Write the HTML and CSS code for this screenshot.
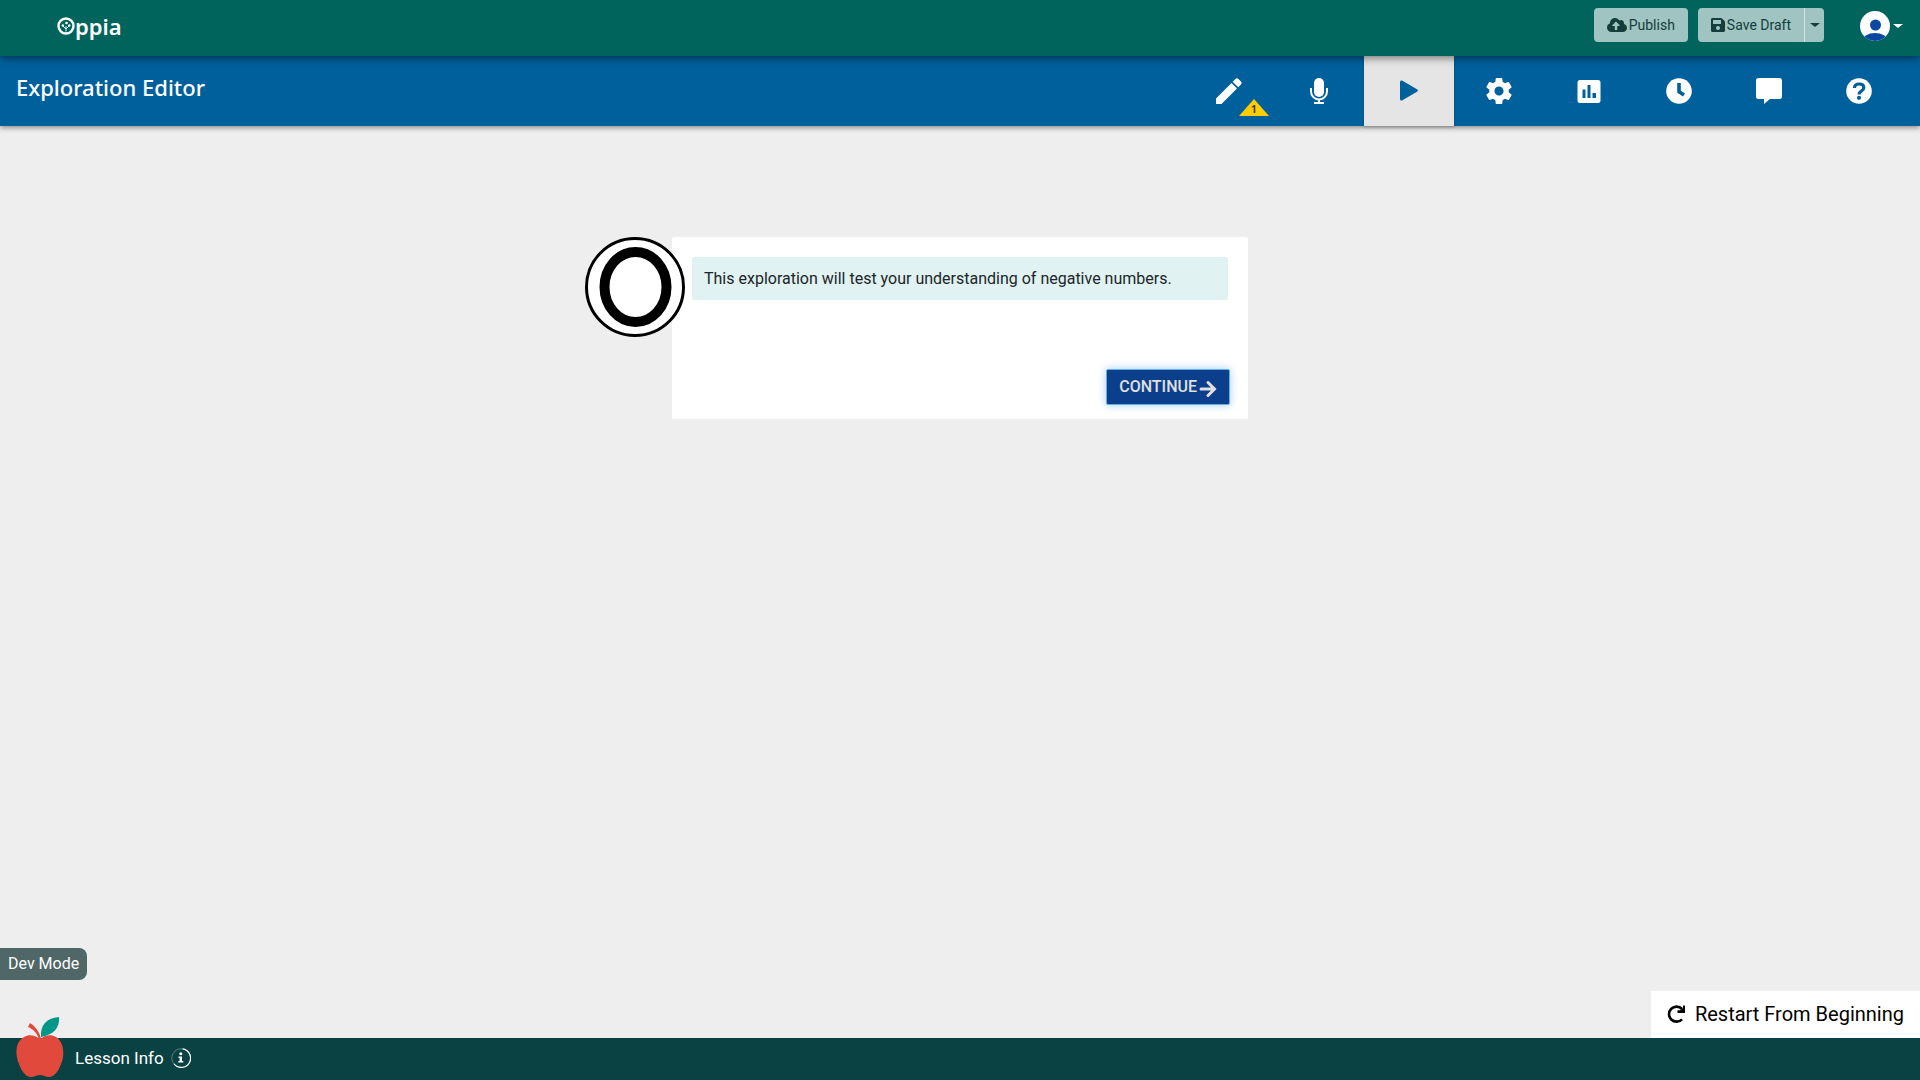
FILE: index.html
```html
<!DOCTYPE html>
<html lang="en">
<head>
<meta charset="utf-8">
<meta name="viewport" content="width=device-width, initial-scale=1">
<title>Exploration Editor - Oppia</title>
<link rel="stylesheet" href="styles.css">
</head>
<body>
<header class="topbar">
  <a class="brand" href="#" aria-label="Oppia">
    <svg class="brand-mark" viewBox="0 0 18 18" aria-hidden="true">
      <circle cx="9" cy="9" r="7.500" fill="none" stroke="#fff" stroke-width="2.400"/>
      <path d="M9 14.500V9M9 12L6 9M9 12l3-3" fill="none" stroke="#fff" stroke-width=".9"/>
      <circle cx="9.500" cy="6" r="1.300" fill="#fff"/><circle cx="5.800" cy="8.500" r="1.200" fill="#fff"/><circle cx="12.300" cy="8.500" r="1.200" fill="#fff"/>
    </svg><span class="brand-name">ppia</span>
  </a>
  <div class="actions">
    <button class="action" type="button">
      <svg class="cloud" viewBox="0 0 640 512" fill="currentColor" aria-hidden="true"><path d="M537.600 226.600c4.100-10.700 6.400-22.400 6.400-34.600 0-53-43-96-96-96-19.700 0-38.100 6-53.300 16.200C367 64.200 315.300 32 256 32c-88.400 0-160 71.600-160 160 0 2.700.1 5.400.2 8.100C40.200 219.800 0 273.200 0 336c0 79.500 64.500 144 144 144h368c70.700 0 128-57.300 128-128 0-61.900-44-113.600-102.400-125.400zM393.400 288H328v112c0 8.800-7.200 16-16 16h-48c-8.800 0-16-7.200-16-16V288h-65.400c-14.300 0-21.400-17.200-11.300-27.300l105.400-105.400c6.200-6.200 16.400-6.200 22.600 0l105.400 105.400c10.100 10.100 2.900 27.300-11.300 27.300z"/></svg>Publish
    </button>
    <div class="split">
      <button class="action split-main" type="button">
        <svg class="disk" viewBox="0 32 448 448" fill="currentColor" aria-hidden="true"><path d="M433.900 129.900l-83.900-83.900A48 48 0 0 0 316.100 32H48C21.500 32 0 53.500 0 80v352c0 26.500 21.500 48 48 48h352c26.500 0 48-21.500 48-48V163.900a48 48 0 0 0-14.100-34zM224 416c-35.300 0-64-28.700-64-64s28.700-64 64-64 64 28.700 64 64-28.700 64-64 64zm96-304.500V212c0 6.600-5.400 12-12 12H76c-6.600 0-12-5.400-12-12V108c0-6.600 5.400-12 12-12h228.500c3.200 0 6.200 1.300 8.500 3.500l3.500 3.500a12 12 0 0 1 3.500 8.500z"/></svg>Save Draft
      </button>
      <button class="action split-toggle" type="button" aria-label="More save options"><span class="caret"></span></button>
    </div>
    <button class="profile" type="button" aria-label="Account menu">
      <svg class="avatar" viewBox="0 0 30 30" aria-hidden="true">
        <clipPath id="disc"><circle cx="15" cy="15" r="15"/></clipPath>
        <g clip-path="url(#disc)"><path fill="#fff" d="M0 0h30v30H0z"/><circle cx="15.500" cy="14" r="5.500" fill="#0d47a1"/><ellipse cx="15" cy="30" rx="12.500" ry="8" fill="#0d47a1"/></g>
      </svg>
      <span class="caret"></span>
    </button>
  </div>
</header>

<nav class="editor-bar" aria-label="Editor">
  <h1 class="title">Exploration Editor</h1>
  <div class="tabs">
    <a class="tab" href="#" aria-label="Edit"><svg viewBox="0 0 26 26" fill="currentColor" aria-hidden="true"><path d="M0 20.500L15.500 5l5.500 5.500L5.500 26H0z"/><path d="M16.700 3.800l2.700-2.700q1.500-1.500 3 0l2.500 2.500q1.500 1.500 0 3l-2.700 2.700z"/></svg>
      <span class="warning"><svg viewBox="0 0 30 17" aria-hidden="true"><path d="M15 0l15 17H0z" fill="#fc0"/></svg><span class="warning-count">1</span></span></a>
    <a class="tab" href="#" aria-label="Translate"><svg viewBox="0 0 26 26" fill="currentColor" aria-hidden="true"><rect x="8" y="0" width="10" height="19" rx="5"/><path d="M5 10v3.500a8 8 0 0 0 16 0V10" fill="none" stroke="currentColor" stroke-width="2"/><path d="M12 21h2v3h4v2H8v-2h4z"/></svg></a>
    <a class="tab tab-active" href="#" aria-label="Preview" aria-current="page"><svg viewBox="0 0 26 26" fill="currentColor" aria-hidden="true"><path d="M4 4q0-2 2-1.400l15.400 9q1.200.9 0 1.800L6 22.400q-2 .6-2-1.400z"/></svg></a>
    <a class="tab" href="#" aria-label="Settings"><svg viewBox="2 2 20 20" fill="currentColor" aria-hidden="true"><path d="M19.430 12.980c.040-.320.070-.640.070-.980s-.030-.660-.070-.980l2.110-1.650c.190-.150.240-.420.120-.640l-2-3.460c-.120-.220-.390-.300-.610-.220l-2.490 1c-.520-.400-1.080-.730-1.690-.980l-.380-2.650C14.460 2.180 14.250 2 14 2h-4c-.250 0-.460.180-.490.420l-.380 2.650c-.610.250-1.170.590-1.690.980l-2.490-1c-.230-.090-.490 0-.610.220l-2 3.460c-.130.220-.070.490.120.640l2.110 1.650c-.040.320-.070.650-.070.980s.030.660.070.980l-2.110 1.650c-.190.150-.240.420-.120.640l2 3.460c.120.220.390.300.610.220l2.490-1c.520.400 1.080.730 1.690.980l.380 2.650c.030.240.240.420.490.420h4c.250 0 .460-.180.490-.420l.380-2.650c.610-.250 1.170-.590 1.690-.980l2.490 1c.230.090.490 0 .610-.220l2-3.460c.120-.220.070-.490-.120-.640l-2.110-1.650zM12 15.500c-1.930 0-3.500-1.570-3.500-3.500s1.570-3.500 3.500-3.500 3.500 1.570 3.500 3.500-1.570 3.500-3.500 3.500z"/></svg></a>
    <a class="tab" href="#" aria-label="Statistics"><svg viewBox="0 0 26 26" fill="currentColor" aria-hidden="true"><path fill-rule="evenodd" d="M4 2h18q2.500 0 2.500 2.500v18Q24.500 25 22 25H4q-2.500 0-2.500-2.500v-18Q1.500 2 4 2zM6.500 11.500V20H9.500v-8.500zM11.500 7v13h3V7zM16.500 15v5h3.500v-5z"/></svg></a>
    <a class="tab" href="#" aria-label="History"><svg viewBox="0 0 26 26" aria-hidden="true"><circle cx="13" cy="13" r="12.800" fill="#fff"/><path d="M13 5v8.700l5 3.300" fill="none" stroke="#00609c" stroke-width="3.600"/></svg></a>
    <a class="tab" href="#" aria-label="Feedback"><svg viewBox="0 0 26 26" fill="currentColor" aria-hidden="true"><path d="M2.500 0h21Q26 0 26 2.500v16q0 2.500-2.500 2.500H14l-6 5v-5H2.500Q0 21 0 18.500v-16Q0 0 2.500 0z"/></svg></a>
    <a class="tab" href="#" aria-label="Help"><svg viewBox="0 0 26 26" aria-hidden="true"><circle cx="13" cy="13" r="12.800" fill="#fff"/><path d="M8.500 10q0-4 4.700-4 4.600 0 4.600 3.700 0 2-2.500 3.500-2.200 1.300-2.200 3.300" fill="none" stroke="#00609c" stroke-width="3.200"/><circle cx="13" cy="19.800" r="2.100" fill="#00609c"/></svg></a>
  </div>
</nav>

<main class="preview">
  <section class="card" aria-label="Lesson card">
    <svg class="speaker" viewBox="0 0 100 100" aria-hidden="true"><circle cx="50" cy="50" r="48.500" fill="#fff" stroke="#000" stroke-width="3"/><ellipse cx="50.500" cy="50" rx="31" ry="35" fill="#fff" stroke="#000" stroke-width="10"/></svg>
    <p class="message">This exploration will test your understanding of negative numbers.</p>
    <button class="continue" type="button">CONTINUE
      <svg viewBox="0 0 18 18" fill="none" stroke="currentColor" stroke-width="3" stroke-linecap="round" aria-hidden="true"><path d="M2 9h13M9 2.500L15.500 9 9 15.500"/></svg>
    </button>
  </section>
  <button class="restart" type="button">
    <svg viewBox="0 0 18 18" fill="none" stroke="currentColor" stroke-width="2.600" aria-hidden="true"><path d="M15 14.300A7.500 7.500 0 1 1 15 4"/><path d="M18 .5V8h-7.500V5.200h2.800L16 3V.5z" fill="currentColor" stroke="none"/></svg>
    Restart From Beginning
  </button>
  <div class="dev-mode">Dev Mode</div>
</main>

<footer class="lesson-bar">
  <svg class="apple" viewBox="0 0 48 60" aria-hidden="true">
    <path fill="#e0493c" d="M24 22c-5-4-11-5-16-2-9 5-9 18-5 27 3 9 9 15 15 12.500 4-2 8-2 12 0 6 2.500 12-3.500 15-12.500 4-9 3-22-5-27-5-3-11-2-16 2z"/>
    <path fill="#e0493c" d="M23 22C21 16 17 12 12 10l2-4c6 4 10 10 11 16z"/>
    <path fill="#009688" d="M25 20C24 9 30 1 43 0c1 11-6 18-18 20z"/>
  </svg>
  <a class="lesson-info" href="#">Lesson Info
    <svg viewBox="0 0 20 20" aria-hidden="true"><path d="M11.500.9a9.300 9.300 0 1 1-8.500 15" fill="none" stroke="#fff" stroke-width="1.300"/><path d="M3 16A9.300 9.300 0 0 1 11.500.9" fill="none" stroke="#8fa9a9" stroke-width=".6"/><circle cx="9.800" cy="5.800" r="1.500" fill="#fff"/><path d="M7.500 8.500H11V13h1.300v1.600H7.300V13h1.300v-2.900H7.500z" fill="#fff"/></svg>
  </a>
</footer>
</body>
</html>
```
FILE: styles.css
```css
* { box-sizing: border-box; }

body {
  margin: 0;
  min-height: 100vh;
  display: flex;
  flex-direction: column;
  background: #eee;
  color: #212529;
  font: 16px/24px Roboto, sans-serif;
}

button { font: inherit; color: inherit; border: 0; cursor: pointer; }
a { color: inherit; text-decoration: none; }
svg { display: block; flex: none; }

.topbar {
  position: relative;
  z-index: 2;
  display: flex;
  align-items: flex-start;
  justify-content: space-between;
  height: 56px;
  padding: 8px 16px 0 57px;
  background: #00645c;
  box-shadow: 0 2px 8px rgba(0, 0, 0, .5);
}

.brand {
  display: flex;
  align-items: center;
  height: 36px;
  color: #fff;
  font: 600 22px/36px "Noto Sans", sans-serif;
}
.brand-mark { width: 18px; height: 18px; }

.actions { display: flex; }
.action {
  display: flex;
  align-items: center;
  height: 34px;
  padding: 0 13px;
  border-radius: 4px;
  background: #9fc4c1;
  color: #143d3b;
  font-size: 14px;
}
.cloud { width: 20px; height: 16px; margin-right: 2px; }
.disk { width: 14px; height: 14px; margin-right: 2px; }
.split {
  display: flex;
  gap: 1px;
  margin-left: 10px;
  background: linear-gradient(#d2e4e2, #d2e4e2) center / calc(100% - 8px) 100% no-repeat;
}
.split-main { border-radius: 4px 0 0 4px; }
.split-toggle { justify-content: center; width: 19px; padding: 0; border-radius: 0 4px 4px 0; }
.caret {
  border: solid transparent;
  border-width: 4px 5px 0;
  border-top-color: currentColor;
}
.profile {
  display: flex;
  align-items: center;
  gap: 3px;
  margin: 3px 1px 0 36px;
  padding: 0;
  height: 30px;
  background: none;
  color: #fff;
}
.avatar { width: 30px; height: 30px; }

.editor-bar {
  position: relative;
  display: flex;
  justify-content: space-between;
  height: 70px;
  padding: 0 16px;
  background: #00609c;
  color: #fff;
  box-shadow: 0 2px 5px rgba(0, 0, 0, .4);
}
.title {
  margin: 15px 0 0;
  font: 500 22px/32px "Noto Sans", sans-serif;
}
.tabs { display: flex; }
.tab {
  position: relative;
  display: flex;
  align-items: center;
  justify-content: center;
  width: 90px;
}
.tab > svg { width: 26px; height: 26px; }
.tab-active {
  background: #e5e5e5;
  color: #00609c;
  box-shadow: 0 1px 3px rgba(0, 0, 0, .2);
}
.warning { position: absolute; left: 55px; bottom: 10px; width: 30px; height: 17px; }
.warning svg { width: 30px; height: 17px; }
.warning-count {
  position: absolute;
  inset: 3px 0 0;
  color: #333;
  font: 600 11px/14px "Noto Sans", sans-serif;
  text-align: center;
}

.preview {
  position: relative;
  flex: 1;
  display: flex;
  flex-direction: column;
  align-items: center;
  justify-content: space-between;
  padding-top: 111px;
}
.card {
  position: relative;
  display: flex;
  flex-direction: column;
  justify-content: space-between;
  width: 30%;
  min-width: 360px;
  min-height: 182px;
  padding: 20px 20px 14px;
  border-radius: 2px 2px 0 0;
  background: #fff;
}
.speaker { position: absolute; left: -87px; top: 0; width: 100px; height: 100px; }
.message {
  margin: 0;
  padding: 10px 12px 9px;
  border-radius: 2px;
  background: #e0f2f1;
}
.continue {
  align-self: flex-end;
  display: flex;
  align-items: center;
  gap: 2px;
  height: 36px;
  margin-right: -2px;
  padding: 0 12px;
  border: 1px solid #66afe9;
  border-radius: 2px;
  background: #0b3f8c;
  color: #e0e0e0;
  font-weight: 500;
  box-shadow: 0 0 8px rgba(102, 175, 233, .6);
}
.continue svg { width: 18px; height: 18px; margin-top: 4px; }

.restart {
  align-self: flex-end;
  display: flex;
  align-items: center;
  gap: 10px;
  height: 47px;
  padding: 0 16px 2px;
  background: #fff;
  color: #000;
  font-size: 20px;
}
.restart svg { width: 18px; height: 18px; }

.dev-mode {
  position: absolute;
  left: 0;
  bottom: 58px;
  padding: 4px 8px;
  border-radius: 0 8px 8px 0;
  background: #4f6867;
  color: #fff;
}

.lesson-bar {
  position: relative;
  display: flex;
  align-items: center;
  height: 42px;
  padding: 0 0 2px 75px;
  background: #0a4142;
  color: #fff;
}
.apple { position: absolute; left: 16px; bottom: 3px; width: 48px; height: 60px; }
.lesson-info { display: flex; align-items: center; gap: 7px; font-size: 17px; }
.lesson-info svg { width: 20px; height: 20px; }
```
